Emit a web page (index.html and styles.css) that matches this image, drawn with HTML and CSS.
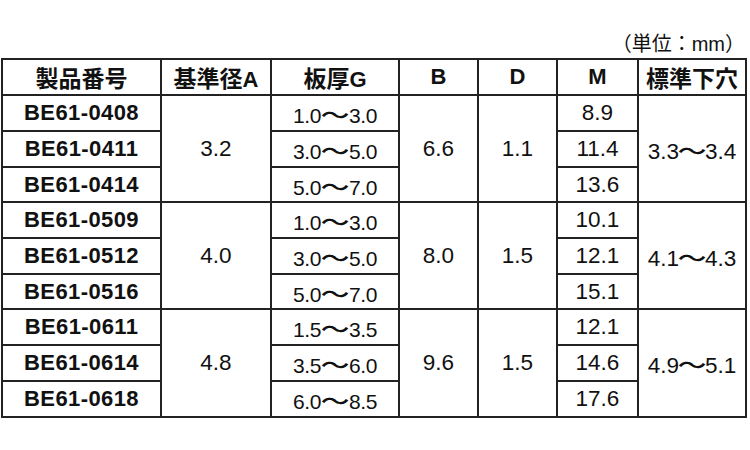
FILE: index.html
```html
<!DOCTYPE html>
<html lang="ja">
<head>
<meta charset="utf-8">
<link rel="stylesheet" href="styles.css">
</head>
<body>
<div class="page">
  <div class="unit">（単位：mm）</div>
  <table class="spec">
    <colgroup>
      <col class="c1"><col class="c2"><col class="c3"><col class="c4"><col class="c5"><col class="c6"><col class="c7">
    </colgroup>
    <thead>
      <tr>
        <th class="jp">製品番号</th>
        <th class="jp">基準径<span class="lat">A</span></th>
        <th class="jp">板厚<span class="lat">G</span></th>
        <th class="lat">B</th>
        <th class="lat">D</th>
        <th class="lat">M</th>
        <th class="jp">標準下穴</th>
      </tr>
    </thead>
    <tbody>
      <tr>
        <td class="code">BE61-0408</td>
        <td rowspan="3">3.2</td>
        <td class="g">1.0<span class="w">～</span>3.0</td>
        <td rowspan="3">6.6</td>
        <td rowspan="3">1.1</td>
        <td>8.9</td>
        <td rowspan="3" class="h">3.3<span class="w">～</span>3.4</td>
      </tr>
      <tr>
        <td class="code">BE61-0411</td>
        <td class="g">3.0<span class="w">～</span>5.0</td>
        <td>11.4</td>
      </tr>
      <tr class="s">
        <td class="code">BE61-0414</td>
        <td class="g">5.0<span class="w">～</span>7.0</td>
        <td>13.6</td>
      </tr>
      <tr>
        <td class="code">BE61-0509</td>
        <td rowspan="3">4.0</td>
        <td class="g">1.0<span class="w">～</span>3.0</td>
        <td rowspan="3">8.0</td>
        <td rowspan="3">1.5</td>
        <td>10.1</td>
        <td rowspan="3" class="h">4.1<span class="w">～</span>4.3</td>
      </tr>
      <tr>
        <td class="code">BE61-0512</td>
        <td class="g">3.0<span class="w">～</span>5.0</td>
        <td>12.1</td>
      </tr>
      <tr class="s">
        <td class="code">BE61-0516</td>
        <td class="g">5.0<span class="w">～</span>7.0</td>
        <td>15.1</td>
      </tr>
      <tr>
        <td class="code">BE61-0611</td>
        <td rowspan="3">4.8</td>
        <td class="g">1.5<span class="w">～</span>3.5</td>
        <td rowspan="3">9.6</td>
        <td rowspan="3">1.5</td>
        <td>12.1</td>
        <td rowspan="3" class="h">4.9<span class="w">～</span>5.1</td>
      </tr>
      <tr>
        <td class="code">BE61-0614</td>
        <td class="g">3.5<span class="w">～</span>6.0</td>
        <td>14.6</td>
      </tr>
      <tr>
        <td class="code">BE61-0618</td>
        <td class="g">6.0<span class="w">～</span>8.5</td>
        <td>17.6</td>
      </tr>
    </tbody>
  </table>
</div>
</body>
</html>
```

FILE: styles.css
```css
html, body {
  margin: 0;
  padding: 0;
  background: #ffffff;
}

.page {
  width: 750px;
  height: 450px;
  padding: 31px 0 0 1px;
  box-sizing: border-box;
  font-family: "Liberation Sans", "Noto Sans CJK JP", sans-serif;
  color: #111111;
}

.unit {
  height: 27px;
  line-height: 26px;
  font-family: "Liberation Sans", "Noto Sans CJK JP", sans-serif;
  font-size: 20px;
  text-align: right;
  padding-right: 4px;
  box-sizing: border-box;
  width: 748px;
}

.spec {
  border-collapse: collapse;
  table-layout: fixed;
  width: 746px;
}

.c1 { width: 159px; }
.c2 { width: 110px; }
.c3 { width: 128px; }
.c4 { width: 79px; }
.c5 { width: 79px; }
.c6 { width: 81px; }
.c7 { width: 108px; }

.spec th,
.spec td {
  border: 2px solid #222222;
  padding: 0;
  text-align: center;
  vertical-align: middle;
  white-space: nowrap;
  overflow: hidden;
}

.spec tr {
  height: 36px;
}

.spec tr.s {
  height: 35px;
}

.spec th {
  font-weight: 700;
  font-size: 22px;
}

.spec th.jp {
  font-family: "Noto Sans CJK JP", sans-serif;
  font-size: 23px;
}

.spec th .lat,
.spec th.lat {
  font-family: "Liberation Sans", sans-serif;
  font-size: 22px;
}

.spec td {
  font-size: 22.5px;
}

.spec td.g {
  font-size: 21px;
  letter-spacing: -0.4px;
}

.spec td.code {
  font-weight: 700;
  font-size: 22px;
  letter-spacing: 0.4px;
}

.w {
  font-family: "Noto Sans CJK JP", sans-serif;
  font-size: 22px;
  font-weight: 500;
  letter-spacing: 0;
  display: inline-block;
  transform: scaleX(1.3);
  margin: 0 3px;
}

.h .w {
  margin: 0 2px;
}
```
